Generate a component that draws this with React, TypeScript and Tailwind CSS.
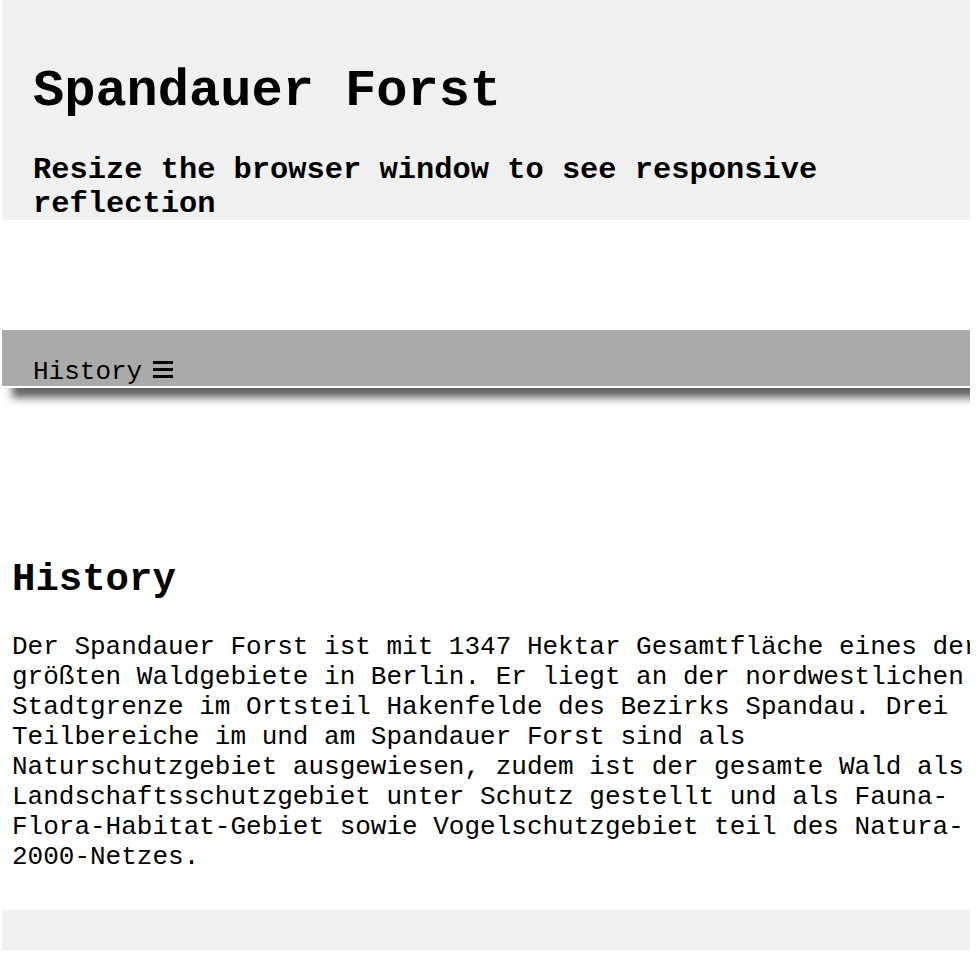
import React from "react";

const mono = { fontFamily: '"Liberation Mono", "Courier New", monospace' };

export default function App() {
  return (
    <div className="min-h-[962px] bg-white text-black" style={mono}>
      <div className="ml-[2px] w-[968px] overflow-hidden">
        <header className="h-[220px] overflow-hidden bg-[#f0f0f0] pl-[31px] pt-[62px]">
          <h1 className="m-0 text-[52px] font-bold leading-[60px]">Spandauer Forst</h1>
          <h3 className="mt-[32px] text-[30.4px] font-bold leading-[33.5px]">
            Resize the browser window to see responsive reflection
          </h3>
        </header>

        <nav className="mt-[110px] h-[58px] border-b-2 border-white bg-[#aaaaaa] pl-[31px] pt-[27px] shadow-[10px_10px_8px_#666]">
          <div className="flex items-start text-[26px] leading-[30px]">
            <span>History</span>
            <span className="ml-[11px] mt-[4px] flex w-[20px] flex-col gap-[4px]">
              <span className="block h-[3px] w-[20px] bg-black" />
              <span className="block h-[3px] w-[20px] bg-black" />
              <span className="block h-[3px] w-[20px] bg-black" />
            </span>
          </div>
        </nav>

        <main className="pl-[10px]">
          <h2 className="mt-[170px] text-[39px] font-bold leading-[44px]">History</h2>
          <p className="mt-[30px] w-[990px] text-[26px] leading-[30px]">
            Der Spandauer Forst ist mit 1347 Hektar Gesamtfläche eines der größten Waldgebiete in Berlin. Er liegt an der nordwestlichen Stadtgrenze im Ortsteil Hakenfelde des Bezirks Spandau. Drei Teilbereiche im und am Spandauer Forst sind als Naturschutzgebiet ausgewiesen, zudem ist der gesamte Wald als Landschaftsschutzgebiet unter Schutz gestellt und als Fauna-Flora-Habitat-Gebiet sowie Vogelschutzgebiet teil des Natura-2000-Netzes.
          </p>
        </main>

        <footer className="mt-[38px] h-[40px] bg-[#f0f0f0]" />
      </div>
    </div>
  );
}
